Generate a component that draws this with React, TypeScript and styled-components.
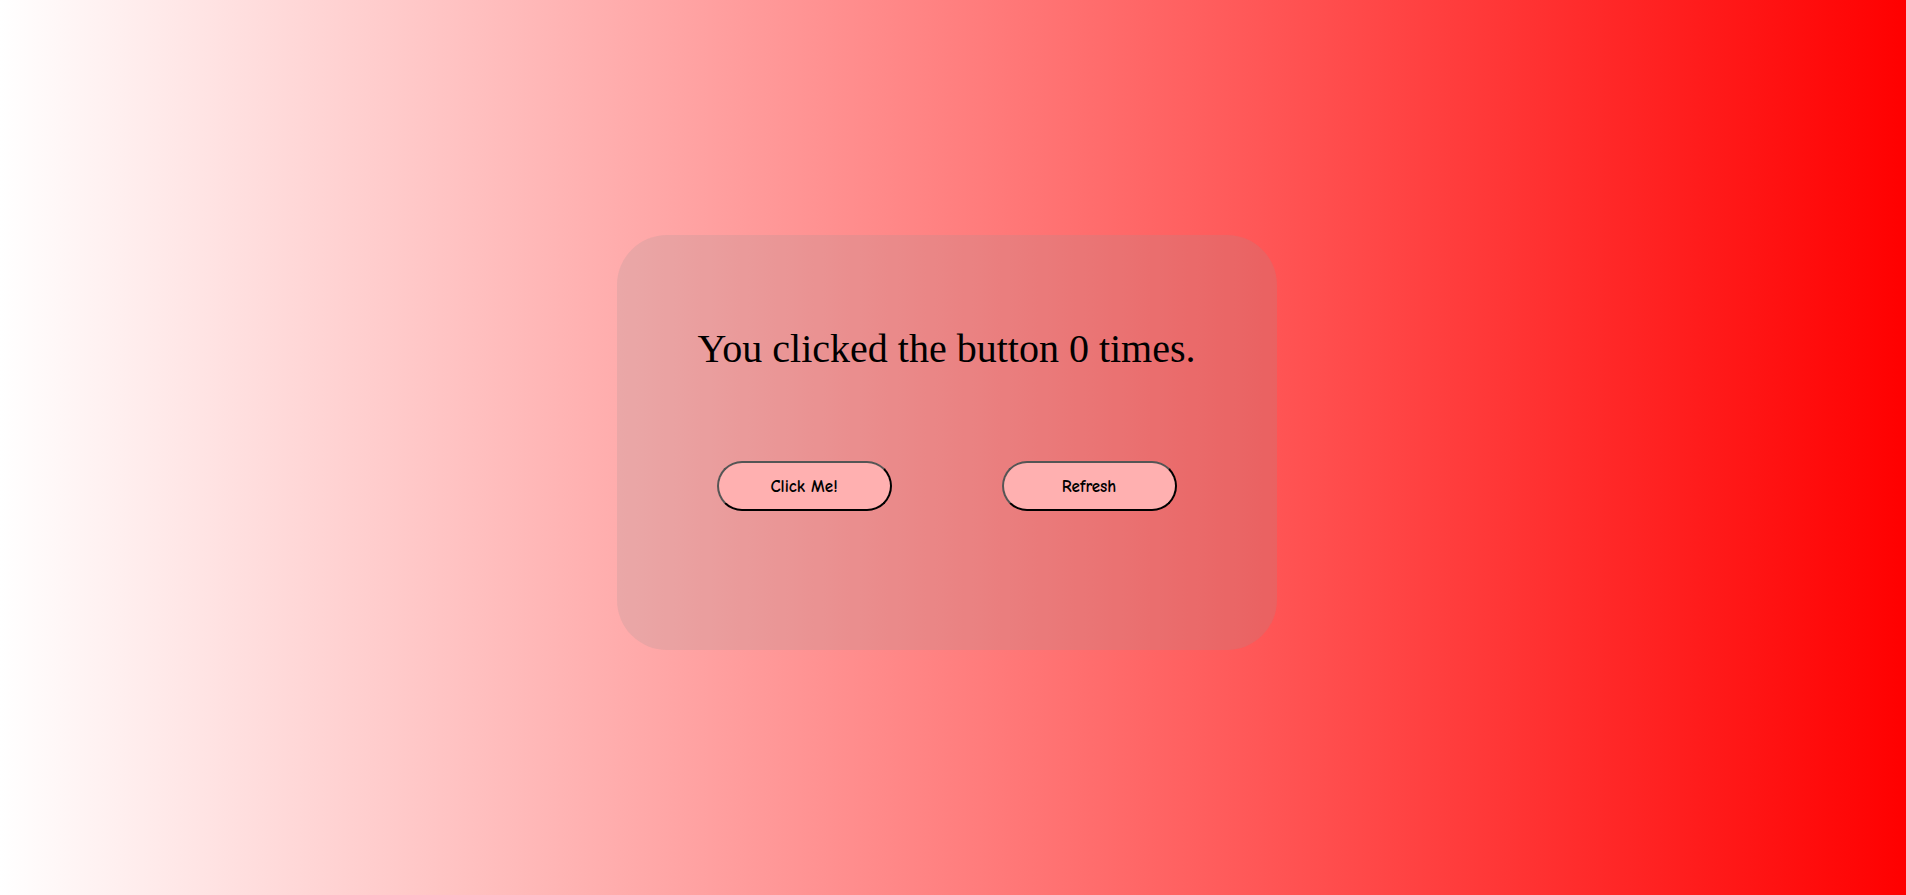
import React, { useState } from 'react';
import styled, { createGlobalStyle } from 'styled-components';

const GlobalStyle = createGlobalStyle`
    html, body {
        margin: 0;
        padding: 0;
    }
    body {
        font-family: "Liberation Serif", "Times New Roman", serif;
    }
`;

const Page = styled.div`
    min-height: 100vh;
    display: flex;
    align-items: center;
    justify-content: center;
    padding: 0 13px 10px 0;
    box-sizing: border-box;
    background: linear-gradient(to right, #ffffff, #ff0000);
`;

const Card = styled.div`
    width: 660px;
    height: 415px;
    box-sizing: border-box;
    padding-top: 91px;
    border-radius: 50px;
    background: rgba(150, 150, 150, 0.2);
    display: flex;
    flex-direction: column;
    align-items: center;
`;

const Message = styled.p`
    margin: 0;
    font-family: "Liberation Serif", "Times New Roman", serif;
    font-size: 40px;
    line-height: 46px;
    color: #000;
`;

const ButtonRow = styled.div`
    display: flex;
    gap: 110px;
    margin-top: 89px;
`;

const PillButton = styled.button`
    width: 175px;
    height: 50px;
    border-radius: 25px;
    border: 2px solid;
    border-color: #555 #000 #000 #555;
    background: #ffb0b0;
    color: #000;
    font-family: "Comic Sans MS", "Comic Neue", cursive;
    font-size: 17px;
    font-weight: 600;
    cursor: pointer;
`;

export default function App() {
    const [count, setCount] = useState(0);

    return (
        <>
            <GlobalStyle />
            <Page>
                <Card>
                    <Message>You clicked the button {count} times.</Message>
                    <ButtonRow>
                        <PillButton onClick={() => setCount(count + 1)}>Click Me!</PillButton>
                        <PillButton onClick={() => setCount(0)}>Refresh</PillButton>
                    </ButtonRow>
                </Card>
            </Page>
        </>
    );
}
